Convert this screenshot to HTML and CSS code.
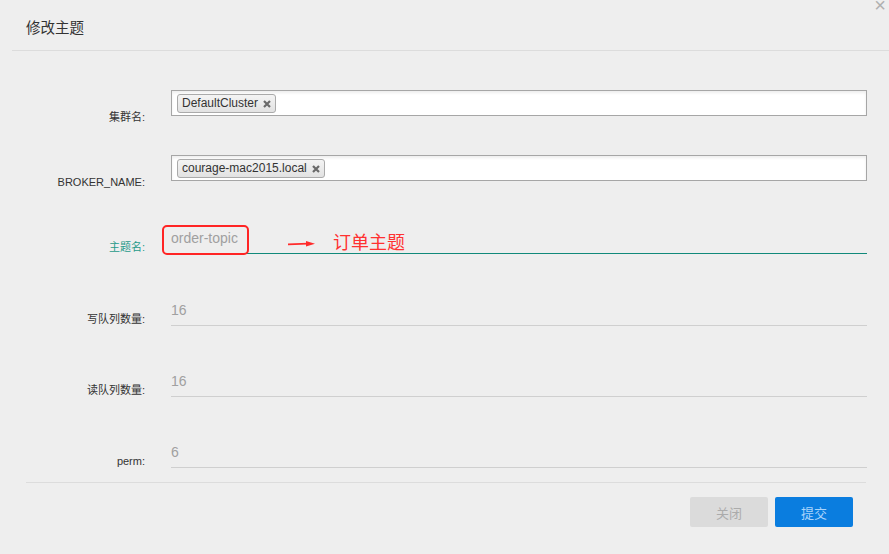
FILE: index.html
```html
<!DOCTYPE html>
<html lang="zh-CN">
<head>
  <meta charset="UTF-8" />
  <title>修改主题</title>
  <link rel="stylesheet" href="styles.css">
</head>
<body>
  <div class="modal">
    <span class="close">&times;</span>
    <div class="modal-header">
      <h4 class="modal-title">修改主题</h4>
    </div>

    <div class="modal-body">
      <div class="row">
        <label class="row-label">集群名:</label>
        <div class="select-box">
          <span class="tag">DefaultCluster
            <svg class="tag-x" width="8" height="8" viewBox="0 0 8 8"><path d="M1 1L7 7M7 1L1 7"/></svg>
          </span>
        </div>
      </div>

      <div class="row">
        <label class="row-label">BROKER_NAME:</label>
        <div class="select-box">
          <span class="tag">courage-mac2015.local
            <svg class="tag-x" width="8" height="8" viewBox="0 0 8 8"><path d="M1 1L7 7M7 1L1 7"/></svg>
          </span>
        </div>
      </div>

      <div class="row row-topic">
        <label class="row-label active">主题名:</label>
        <div class="field">
          <input class="text-input focused" type="text" value="order-topic">
          <!-- annotation drawn on the screenshot -->
          <span class="mark-box"></span>
          <svg class="mark-arrow" width="28" height="8" viewBox="0 0 28 8">
            <path d="M0 4.3L20 3.7" stroke="#ff2b2b" stroke-width="1.8" fill="none"/>
            <path d="M18 1L27 3.8L18 6.6Z" fill="#ff2b2b"/>
          </svg>
          <span class="mark-text">订单主题</span>
        </div>
      </div>

      <div class="row row-input">
        <label class="row-label">写队列数量:</label>
        <div class="field">
          <input class="text-input" type="text" value="16">
        </div>
      </div>

      <div class="row row-input">
        <label class="row-label">读队列数量:</label>
        <div class="field">
          <input class="text-input" type="text" value="16">
        </div>
      </div>

      <div class="row row-input">
        <label class="row-label">perm:</label>
        <div class="field">
          <input class="text-input" type="text" value="6">
        </div>
      </div>
    </div>

    <div class="modal-footer">
      <button class="btn btn-cancel">关闭</button>
      <button class="btn btn-primary">提交</button>
    </div>
  </div>
</body>
</html>
```

FILE: styles.css
```css
html, body {
  margin: 0;
  padding: 0;
  background-color: #eeeeee;
}

body {
  font-family: "Liberation Sans", Arial, "Noto Sans CJK SC", sans-serif;
  color: #333333;
  width: 889px;
  height: 554px;
  overflow: hidden;
}

.modal {
  position: relative;
  height: 554px;
}

.close {
  position: absolute;
  top: -5px;
  right: 3px;
  font-size: 20px;
  line-height: 20px;
  color: #b0b0b0;
}

.modal-header {
  margin-left: 12px;
  height: 50px;
  border-bottom: 1px solid #dcdcdc;
  display: flex;
  align-items: center;
  padding-left: 14px;
}

.modal-title {
  margin: 2px 0 0 0;
  font-size: 14.5px;
  font-weight: normal;
  color: #333333;
}

.modal-body {
  padding: 39px 22px 0 0;
}

.row {
  display: flex;
  align-items: flex-end;
  margin-top: 31px;
}

.row:first-child {
  margin-top: 0;
}

.row-topic {
  margin-top: 35px;
}

.row-input {
  margin-top: 41px;
}

.row-topic + .row-input {
  margin-top: 42px;
}

.row-label {
  width: 145px;
  flex-shrink: 0;
  text-align: right;
  font-size: 11px;
  line-height: 14px;
  color: #333333;
  margin-right: 26px;
}

.row-label.active {
  color: #1f9a8a;
}

.select-box {
  flex: 1;
  height: 26px;
  box-sizing: border-box;
  border: 1px solid #a6a6a6;
  background-color: #ffffff;
  box-shadow: inset 0 2px 3px rgba(0, 0, 0, 0.07);
  margin-bottom: 8px;
  padding: 2px 5px;
}

.tag {
  display: inline-flex;
  align-items: center;
  height: 19px;
  box-sizing: border-box;
  padding: 0 4px 0 4px;
  border: 1px solid #aaaaaa;
  border-radius: 3px;
  background: linear-gradient(#f4f4f4, #e2e2e2);
  font-size: 12px;
  color: #333333;
}

.tag-x {
  margin-left: 5px;
  margin-top: 1px;
  stroke: #6a6a6a;
  stroke-width: 2.2;
}

.field {
  flex: 1;
  position: relative;
}

.text-input {
  display: block;
  width: 100%;
  height: 30px;
  box-sizing: border-box;
  border: none;
  border-bottom: 1px solid #cfcfcf;
  background: transparent;
  padding: 0 0 2px 0;
  font-family: inherit;
  font-size: 14px;
  color: #a0a0a0;
  outline: none;
}

.text-input.focused {
  border-bottom-color: #10897a;
}

.mark-box {
  position: absolute;
  top: 1px;
  left: -9px;
  width: 87px;
  height: 30px;
  box-sizing: border-box;
  border: 2px solid #ff2424;
  border-radius: 5px;
}

.mark-arrow {
  position: absolute;
  top: 16px;
  left: 117px;
}

.mark-text {
  position: absolute;
  top: 7px;
  left: 162px;
  font-size: 18px;
  line-height: 20px;
  color: #ff3131;
  font-family: "Noto Sans CJK SC", sans-serif;
}

.modal-footer {
  margin: 14px 23px 0 26px;
  border-top: 1px solid #dcdcdc;
  padding: 14px 13px 0 0;
  display: flex;
  justify-content: flex-end;
  gap: 7px;
}

.btn {
  width: 78px;
  height: 30px;
  border: none;
  border-radius: 2px;
  font-family: "Noto Sans CJK SC", sans-serif;
  font-size: 13px;
}

.btn-cancel {
  background-color: #dbdbdb;
  color: #ababab;
}

.btn-primary {
  background-color: #0a7ddf;
  color: #a9d4fb;
}
```
